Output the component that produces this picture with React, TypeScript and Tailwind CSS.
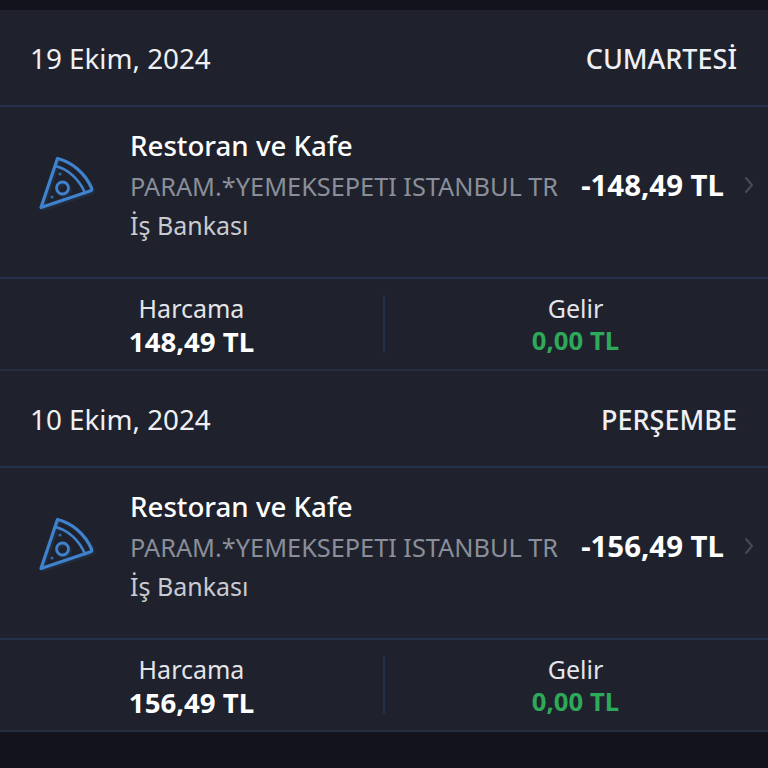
const font = { fontFamily: '"Noto Sans", "Open Sans", sans-serif' };

type Tx = {
  date: string;
  day: string;
  amount: string;
  spend: string;
};

const items: Tx[] = [
  { date: '19 Ekim, 2024', day: 'CUMARTESİ', amount: '-148,49 TL', spend: '148,49 TL' },
  { date: '10 Ekim, 2024', day: 'PERŞEMBE', amount: '-156,49 TL', spend: '156,49 TL' },
];

function PizzaIcon() {
  const shape = (
    <>
      <path d="M3 52.5 L19.5 3.5 C34 7 47 18 53.5 33 C54 34.5 53.5 35.5 52 36 Z" strokeWidth="3.2" />
      <path d="M17.5 11 C30 14 41 24 47 38" strokeWidth="2.6" />
      <circle cx="24.5" cy="33" r="6" strokeWidth="2.8" />
    </>
  );
  return (
    <svg viewBox="0 0 58 58" className="h-[58px] w-[58px]" fill="none" stroke="#3f83cf" strokeLinejoin="round" strokeLinecap="round">
      <g transform="translate(2 2)" stroke="#25344c" opacity="0.6">
        {shape}
      </g>
      {shape}
      <circle cx="22" cy="19" r="1.6" fill="#35689f" stroke="none" />
      <circle cx="14" cy="42" r="1.6" fill="#35689f" stroke="none" />
    </svg>
  );
}

function Card({ item }: { item: Tx }) {
  return (
    <section className="bg-[#1f222c]">
      <div className="flex h-[97px] items-center justify-between border-b-2 border-[#23324a] pt-[2px] pl-[30px] pr-[31px]">
        <span className="text-[27.8px] text-[#eff0f4]">{item.date}</span>
        <span className="pt-[2px] text-[27px] font-medium text-[#eff0f4]">{item.day}</span>
      </div>
      <div className="flex h-[172px] items-center border-b-2 border-[#23324a] pb-[12px] pl-[38px] pr-[13px]">
        <div className="mb-[4px] w-[92px] shrink-0">
          <PizzaIcon />
        </div>
        <div className="min-w-0 flex-1 pb-[6px]">
          <div className="text-[27.7px] leading-[40px] font-medium text-white">Restoran ve Kafe</div>
          <div className="text-[25.3px] leading-[43px] whitespace-nowrap text-[#8a8e9a]">PARAM.*YEMEKSEPETI ISTANBUL TR</div>
          <div className="text-[25px] leading-[34px] text-[#c9cbd2]">İş Bankası</div>
        </div>
        <span className="mb-[2px] ml-2 text-[29.4px] font-bold whitespace-nowrap text-white">{item.amount}</span>
        <svg viewBox="0 0 12 18" className="mb-[2px] ml-[19px] h-[18px] w-[12px]" fill="none" stroke="#474a59" strokeWidth="2" strokeLinecap="round" strokeLinejoin="round">
          <path d="M3 2 L9 9 L3 16" />
        </svg>
      </div>
      <div className="flex h-[92px] items-center border-b-2 border-[#262f40]">
        <div className="flex h-[58px] w-[385px] flex-col items-center justify-center border-r-2 border-[#23324a] pt-[4px]">
          <span className="text-[25px] leading-[30px] text-[#e4e5ea]">Harcama</span>
          <span className="text-[27.6px] leading-[36px] font-bold text-white">{item.spend}</span>
        </div>
        <div className="flex h-[58px] flex-1 flex-col items-center justify-center pt-[4px] pr-[2px]">
          <span className="text-[25px] leading-[30px] text-[#e4e5ea]">Gelir</span>
          <span className="text-[25.7px] leading-[36px] font-bold text-[#2ea95a]">0,00 TL</span>
        </div>
      </div>
    </section>
  );
}

export default function App() {
  return (
    <div className="h-[768px] w-[768px] overflow-hidden bg-[#12131c] pt-[10px]" style={font}>
      {items.map((item) => (
        <Card key={item.date} item={item} />
      ))}
    </div>
  );
}
